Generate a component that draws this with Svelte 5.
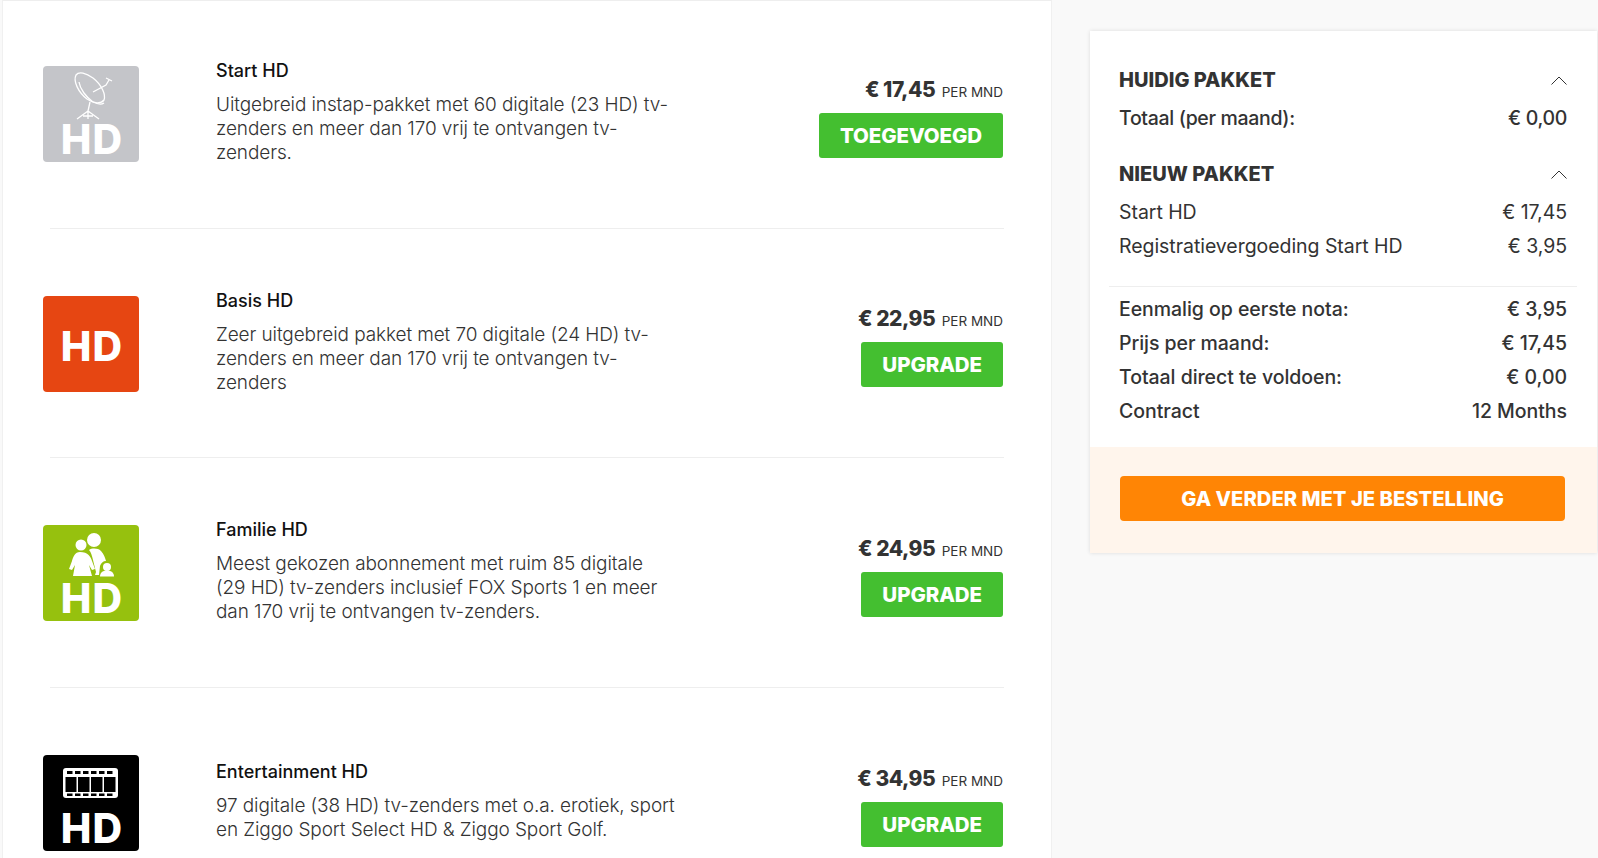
<script>
  const packages = [
    { name: 'Start HD', desc: 'Uitgebreid instap-pakket met 60 digitale (23 HD) tv-zenders en meer dan 170 vrij te ontvangen tv-zenders.', price: '€ 17,45', action: 'TOEGEVOEGD', icon: 'dish' },
    { name: 'Basis HD', desc: 'Zeer uitgebreid pakket met 70 digitale (24 HD) tv-zenders en meer dan 170 vrij te ontvangen tv-zenders', price: '€ 22,95', action: 'UPGRADE', icon: 'basis' },
    { name: 'Familie HD', desc: 'Meest gekozen abonnement met ruim 85 digitale (29 HD) tv-zenders inclusief FOX Sports 1 en meer dan 170 vrij te ontvangen tv-zenders.', price: '€ 24,95', action: 'UPGRADE', icon: 'family' },
    { name: 'Entertainment HD', desc: '97 digitale (38 HD) tv-zenders met o.a. erotiek, sport en Ziggo Sport Select HD & Ziggo Sport Golf.', price: '€ 34,95', action: 'UPGRADE', icon: 'film' }
  ];
  const summary = [
    ['Eenmalig op eerste nota:', '€ 3,95'],
    ['Prijs per maand:', '€ 17,45'],
    ['Totaal direct te voldoen:', '€ 0,00'],
    ['Contract', '12 Months']
  ];
</script>

<div class="page">
  <main class="list">
    {#each packages as p}
      <section class="row">
        <div class="icon {p.icon}">
          {#if p.icon === 'dish'}
            <svg class="pic" viewBox="0 0 96 50" fill="none" stroke="#fff" stroke-width="1.3">
              <path d="M33 5c-3 6 2 17 11 24 7 5 14 5 17 1 2-5-2-15-11-22-7-5-14-7-17-3z" />
              <path d="M36 12c1 7 7 15 14 20 4 2 8 3 11 1" />
              <path d="M50 22l13-7 3-5M63 8l6 3" />
              <path d="M47 32l-2 9M45 41l-11 8M45 41l11 8M40 46h10M45 41v8" />
            </svg>
          {:else if p.icon === 'family'}
            <svg class="pic" viewBox="0 0 96 50" fill="#fff">
              <circle cx="51" cy="11" r="7" />
              <circle cx="38" cy="16" r="5.5" />
              <path d="M37 23c-5 0-7 5-8 9l-3 8 3 1 3-5-2 11h19l-3-11 3 5 3-1-3-8c-1-4-4-9-12-9z" />
              <path d="M46 21c3-2 9-2 12 1 3 3 4 7 5 10-3 0-5 2-6 5l-1 9h-4l1-3-3-12c-1-4-2-8-4-10z" />
              <circle cx="64" cy="38" r="4" />
              <path d="M57 47.500c0-4 3-6 7-6s7 2 7 6z" />
            </svg>
          {:else if p.icon === 'film'}
            <svg class="pic" viewBox="0 0 96 50" fill="none">
              <rect x="20" y="9" width="55" height="30" rx="3" fill="#fff" />
              <rect x="22.500" y="18" width="11" height="15" fill="#000" />
              <rect x="35" y="18" width="11.500" height="15" fill="#000" />
              <rect x="48" y="18" width="11.500" height="15" fill="#000" />
              <rect x="61" y="18" width="11.500" height="15" fill="#000" />
              {#each [24, 32, 40, 48, 56, 64] as x}
                <rect x={x} y="12" width="5.500" height="3" fill="#000" />
                <rect x={x} y="34.500" width="5.500" height="2.500" fill="#000" />
              {/each}
            </svg>
          {/if}
          <span class="hd">HD</span>
        </div>
        <div class="info">
          <h3>{p.name}</h3>
          <p>{p.desc}</p>
        </div>
        <div class="buy">
          <div class="price"><strong>{p.price}</strong> <span>PER MND</span></div>
          <button>{p.action}</button>
        </div>
      </section>
    {/each}
  </main>

  <aside class="cart">
    <div class="cart-body">
      <div class="head">
        <h2>HUIDIG PAKKET</h2>
        <svg width="16" height="9" viewBox="0 0 16 9" fill="none" stroke="#333" stroke-width="1"><path d="M.5 8.500L8 1l7.500 7.500" /></svg>
      </div>
      <div class="line first"><span>Totaal (per maand):</span><span>€ 0,00</span></div>

      <div class="head second">
        <h2>NIEUW PAKKET</h2>
        <svg width="16" height="9" viewBox="0 0 16 9" fill="none" stroke="#333" stroke-width="1"><path d="M.5 8.500L8 1l7.500 7.500" /></svg>
      </div>
      <div class="line light"><span>Start HD</span><span>€ 17,45</span></div>
      <div class="line light"><span>Registratievergoeding Start HD</span><span>€ 3,95</span></div>

      <hr />
      {#each summary as [label, value]}
        <div class="line"><span>{label}</span><span>{value}</span></div>
      {/each}
    </div>
    <div class="cart-foot">
      <button>GA VERDER MET JE BESTELLING</button>
    </div>
  </aside>
</div>

<style>
  :global(body) { background: #f9f9f9; overflow: hidden; }

  .page {
    display: flex; height: 858px; overflow: hidden; align-items: flex-start;
    font-family: Inter, "Liberation Sans", sans-serif; color: #333;
  }

  .list {
    width: 1050px; margin-left: 2px; background: #fff; flex: 0 0 auto;
    border-top: 1px solid #eee; border-left: 1px solid #f0f0f0; border-right: 1px solid #f0f0f0;
    box-sizing: border-box; height: 858px;
  }
  .row {
    display: flex; align-items: center; height: 229.5px; box-sizing: border-box; margin-left: 47px; margin-right: 47px;
    border-bottom: 1px solid #eee; padding-top: 2px;
  }
  .row:first-child { height: 227.5px; padding-top: 0; }
  .row:last-child { border-bottom: 0; }

  .icon {
    width: 96px; height: 96px; border-radius: 4px; margin-left: -7px; flex: 0 0 auto;
    position: relative; color: #fff;
  }
  .icon.dish { background: #c4c5c9; }
  .icon.basis { background: #e64612; }
  .icon.family { background: #96c10e; }
  .icon.film { background: #000; }
  .pic { position: absolute; left: 0; top: 4px; width: 96px; height: 50px; }
  .hd {
    position: absolute; left: 0; right: 0; top: 58px; text-align: center; padding-left: 2px;
    font: 800 41px/30px Inter, sans-serif; letter-spacing: 1px;
  }
  .basis .hd { top: 35px; }

  .info { width: 460px; margin-left: 77px; padding-bottom: 4px; }
  h3 { margin: 0; font-size: 18px; line-height: 24px; font-weight: 500; color: #111; }
  p { margin: 10px 0 0; font-size: 19px; line-height: 24px; font-weight: 300; letter-spacing: -.1px; color: #333; }

  .buy { margin-left: auto; margin-right: 1px; padding-top: 4px; display: flex; flex-direction: column; align-items: flex-end; }
  .price { line-height: 30px; white-space: nowrap; }
  .price strong { font-size: 21px; font-weight: 800; letter-spacing: -.5px; }
  .price span { font-size: 13.5px; margin-left: 2px; }
  .buy button {
    margin-top: 6px; height: 45px; padding: 0 21px; border: 0; border-radius: 3px;
    background: #44bf30; color: #fff; font: 800 20.5px Inter, sans-serif; letter-spacing: -.1px;
  }

  .cart {
    width: 507px; margin: 31px 0 0 38px; background: #fff; flex: 0 0 auto;
    box-shadow: 0 0 4px rgba(0, 0, 0, .12);
  }
  .cart-body { padding: 30px 30px 19px 29px; }
  .head { display: flex; justify-content: space-between; align-items: center; height: 38px; margin-bottom: 2px; }
  .head.second { margin-top: 20px; }
  h2 { margin: 0; font-size: 20px; font-weight: 800; letter-spacing: 0; color: #333; }
  .line { display: flex; justify-content: space-between; line-height: 34px; font-size: 19.5px; font-weight: 500; letter-spacing: -.05px; color: #333; }
  .line.first { letter-spacing: -.33px; }
  .line.light { font-weight: 400; }
  hr { border: 0; border-top: 1px solid #eee; margin: 23px -10px 5px; }

  .cart-foot { background: #fff5ec; padding: 29px 32px 32px 30px; }
  .cart-foot button {
    display: block; width: 100%; height: 45px; border: 0; border-radius: 4px;
    background: #ff8505; color: #fff; font: 800 20.2px Inter, sans-serif; letter-spacing: 0;
  }
</style>
